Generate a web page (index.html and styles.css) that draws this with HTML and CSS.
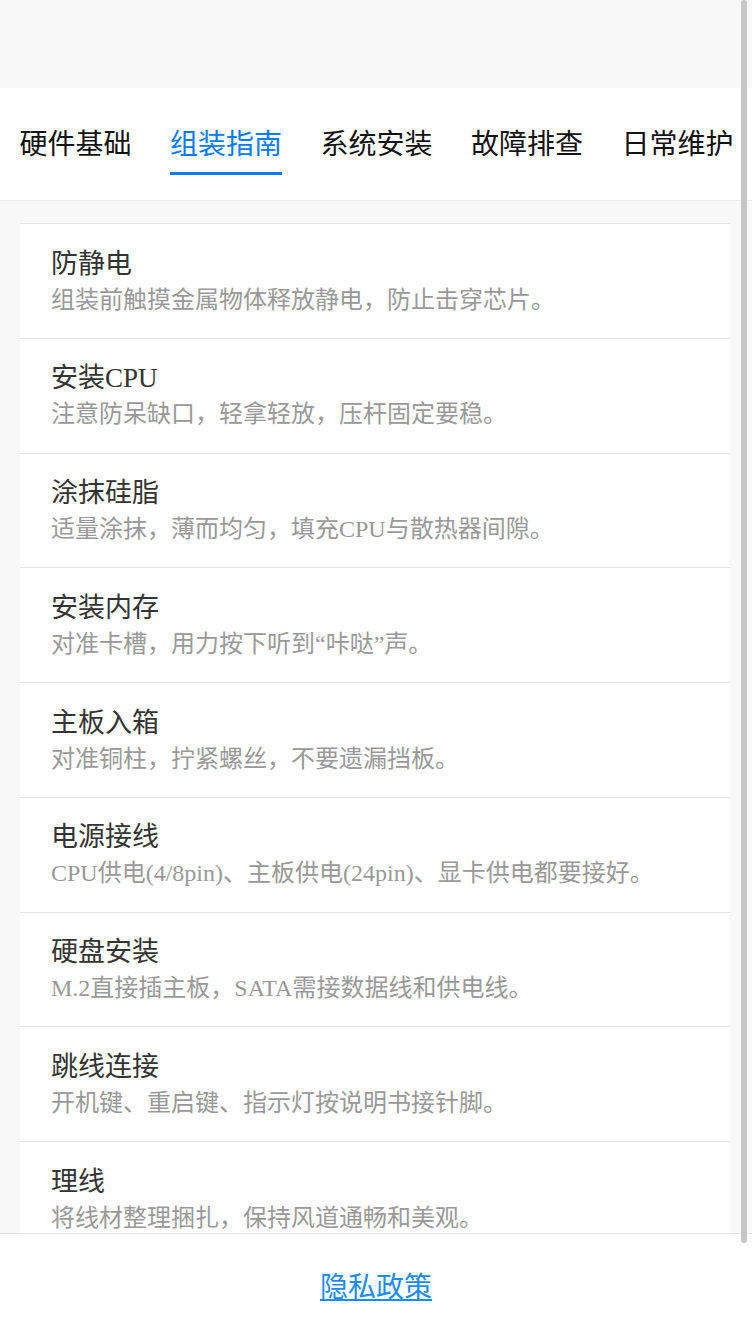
FILE: index.html
```html
<!DOCTYPE html>
<html lang="zh-CN">
<head>
  <meta charset="UTF-8">
  <meta name="viewport" content="width=device-width, initial-scale=1.0">
  <title>装机指南</title>
  <link rel="stylesheet" href="styles.css">
</head>
<body>
  <!-- Empty header area -->
  <div class="header-space"></div>

  <!-- Category tabs -->
  <div class="tabs">
    <div class="tab">硬件基础</div>
    <div class="tab active">组装指南</div>
    <div class="tab">系统安装</div>
    <div class="tab">故障排查</div>
    <div class="tab">日常维护</div>
  </div>

  <!-- Guide list -->
  <div class="guide-list">
    <div class="guide-item">
      <div class="guide-title">防静电</div>
      <div class="guide-desc">组装前触摸金属物体释放静电，防止击穿芯片。</div>
    </div>
    <div class="guide-item">
      <div class="guide-title">安装CPU</div>
      <div class="guide-desc">注意防呆缺口，轻拿轻放，压杆固定要稳。</div>
    </div>
    <div class="guide-item">
      <div class="guide-title">涂抹硅脂</div>
      <div class="guide-desc">适量涂抹，薄而均匀，填充CPU与散热器间隙。</div>
    </div>
    <div class="guide-item">
      <div class="guide-title">安装内存</div>
      <div class="guide-desc">对准卡槽，用力按下听到“咔哒”声。</div>
    </div>
    <div class="guide-item">
      <div class="guide-title">主板入箱</div>
      <div class="guide-desc">对准铜柱，拧紧螺丝，不要遗漏挡板。</div>
    </div>
    <div class="guide-item">
      <div class="guide-title">电源接线</div>
      <div class="guide-desc">CPU供电(4/8pin)、主板供电(24pin)、显卡供电都要接好。</div>
    </div>
    <div class="guide-item">
      <div class="guide-title">硬盘安装</div>
      <div class="guide-desc">M.2直接插主板，SATA需接数据线和供电线。</div>
    </div>
    <div class="guide-item">
      <div class="guide-title">跳线连接</div>
      <div class="guide-desc">开机键、重启键、指示灯按说明书接针脚。</div>
    </div>
    <div class="guide-item">
      <div class="guide-title">理线</div>
      <div class="guide-desc">将线材整理捆扎，保持风道通畅和美观。</div>
    </div>
  </div>

  <!-- Fixed footer -->
  <div class="footer">
    <a href="#" class="footer-link">隐私政策</a>
  </div>

  <div class="scrollbar"></div>
</body>
</html>
```

FILE: styles.css
```css
/* Basic reset */
body, div, a {
  margin: 0;
  padding: 0;
  box-sizing: border-box;
}

body {
  font-family: "Liberation Serif", "Noto Sans CJK SC", serif;
  background-color: #f8f8f8;
  height: 1336px;
  overflow: hidden;
  position: relative;
}

.header-space {
  height: 88px;
}

/* Tabs */
.tabs {
  display: flex;
  align-items: flex-start;
  gap: 38.5px;
  height: 113px;
  padding-left: 19.5px;
  background-color: #fff;
  border-bottom: 1px solid #eeeeee;
  overflow: hidden;
}

.tab {
  flex-shrink: 0;
  font-size: 28px;
  line-height: 28px;
  padding-top: 43px;
  padding-bottom: 13px;
  color: #111;
  white-space: nowrap;
}

.tab.active {
  color: #007aff;
  border-bottom: 3px solid #007aff;
}

/* Guide list */
.guide-list {
  width: 710px;
  margin: 22px 0 0 20px;
  background-color: #fff;
}

.guide-item {
  border-top: 1px solid #e5e5e5;
  padding: 20.5px 30px 21.25px 31px;
}

.guide-title {
  font-size: 27px;
  line-height: 38px;
  color: #333;
}

.guide-desc {
  font-size: 24px;
  line-height: 34px;
  color: #999;
}

/* Footer */
.footer {
  position: fixed;
  left: 0;
  right: 0;
  bottom: 0;
  height: 103px;
  background-color: #fff;
  border-top: 1px solid #e5e5e5;
  display: flex;
  align-items: center;
  justify-content: center;
}

.footer-link {
  font-size: 28px;
  color: #1a8cff;
  text-decoration: underline;
}

/* Overlay scrollbar */
.scrollbar {
  position: absolute;
  top: 0;
  right: 5px;
  width: 6px;
  height: 1243px;
  background-color: #c6c6c6;
  border-radius: 3px;
}
```
